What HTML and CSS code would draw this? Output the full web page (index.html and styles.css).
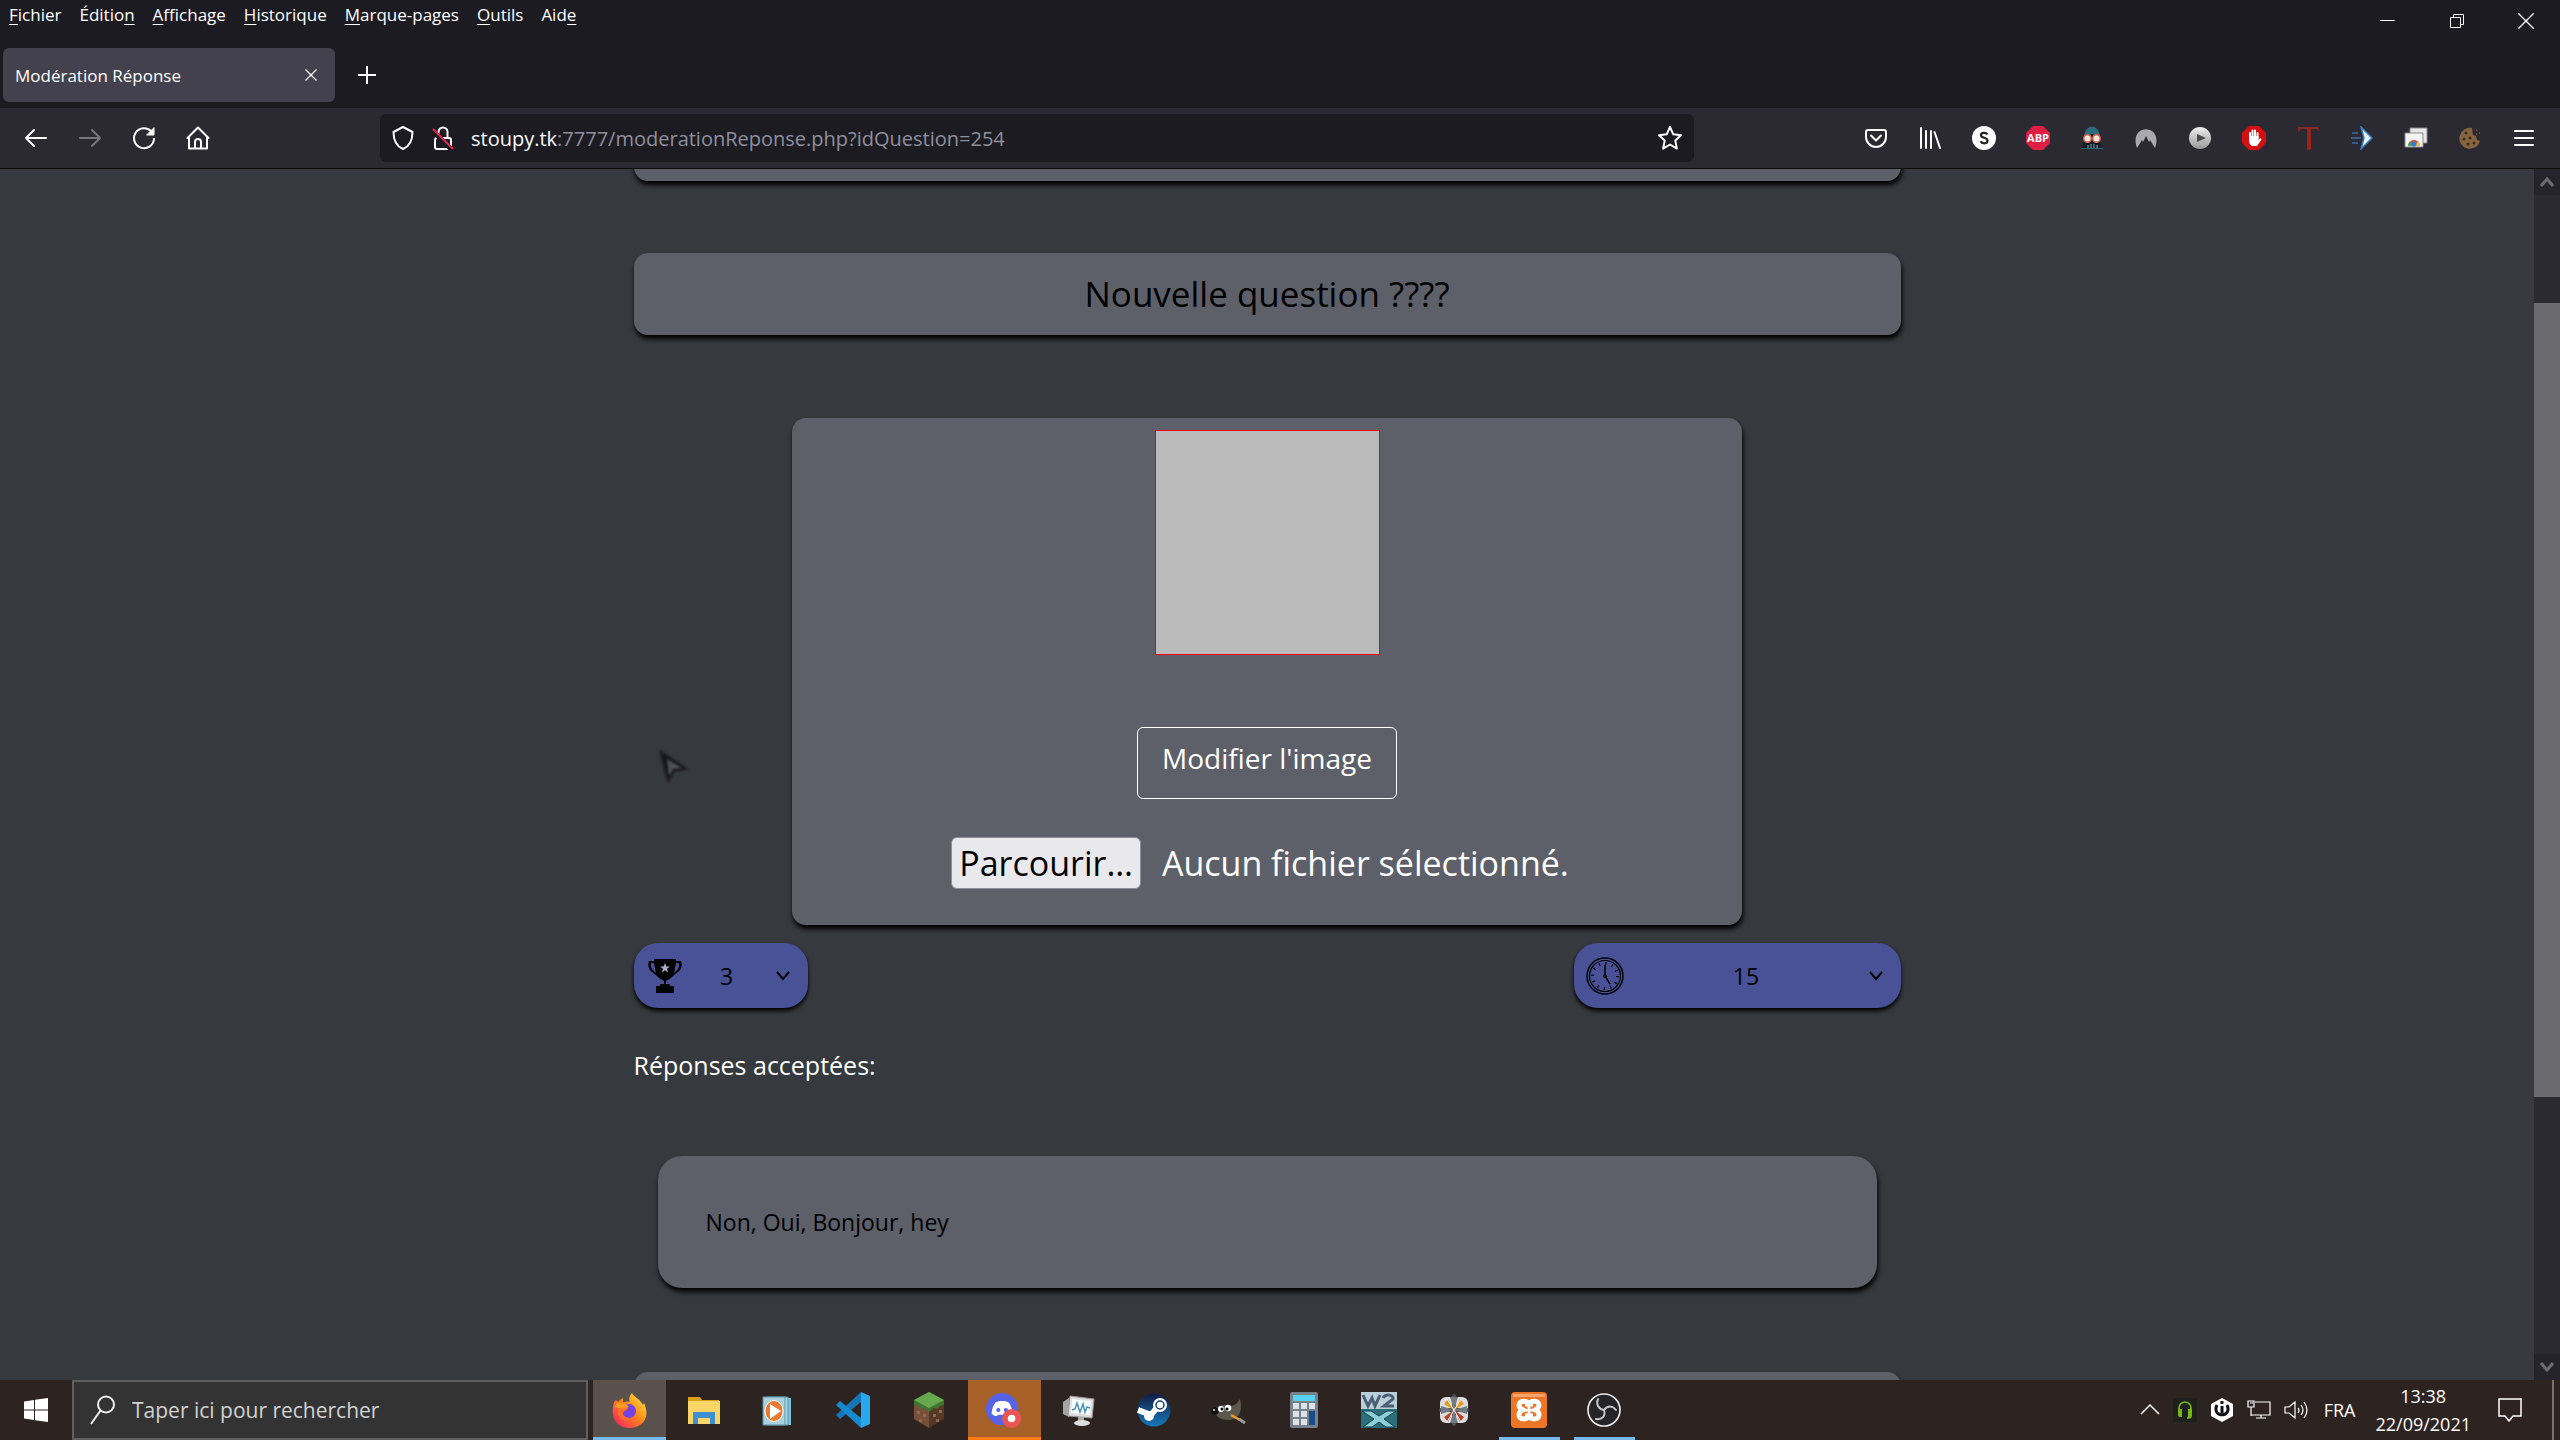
FILE: index.html
```html
<!DOCTYPE html>
<html lang="fr">
<head>
<meta charset="utf-8">
<title>Modération Réponse</title>
<link rel="stylesheet" href="styles.css">
</head>
<body>
<header class="browser">
  <div class="titlebar">
    <nav class="menubar" aria-label="Menus">
      <button><u>F</u>ichier</button>
      <button>Éditio<u>n</u></button>
      <button><u>A</u>ffichage</button>
      <button><u>H</u>istorique</button>
      <button><u>M</u>arque-pages</button>
      <button><u>O</u>utils</button>
      <button>Aid<u>e</u></button>
    </nav>
    <div class="window-controls">
      <button aria-label="Réduire"><svg width="16" height="16" viewBox="0 0 16 16" stroke="#fff"><path d="M0 7.500h15"/></svg></button>
      <button aria-label="Restaurer"><svg width="16" height="16" viewBox="0 0 16 16" fill="none" stroke="#fff"><path d="M1.500 4.500h10v10h-10zM4.500 4.500v-3h10v10h-3"/></svg></button>
      <button aria-label="Fermer"><svg width="16" height="16" viewBox="0 0 16 16" stroke="#fff" stroke-width="1.300"><path d="M0 0l16 16M16 0L0 16"/></svg></button>
    </div>
  </div>
  <div class="tabs">
    <div class="tab"><span>Modération Réponse</span>
      <button aria-label="Fermer l’onglet"><svg width="12" height="12" viewBox="0 0 12 12" stroke="#fbfbfe" stroke-width="1.300"><path d="M.5.5l11 11M11.500.5l-11 11"/></svg></button>
    </div>
    <button class="new-tab" aria-label="Nouvel onglet"><svg width="18" height="18" viewBox="0 0 18 18" stroke="#fbfbfe" stroke-width="2"><path d="M9 0v18M0 9h18"/></svg></button>
  </div>
  <div class="toolbar">
    <div class="nav-buttons">
      <button aria-label="Précédent"><svg width="24" height="24" viewBox="0 0 24 24" fill="none" stroke="#fbfbfe" stroke-width="2" stroke-linecap="round" stroke-linejoin="round"><path d="M22 12H2M10 4l-8 8 8 8"/></svg></button>
      <button aria-label="Suivant"><svg width="24" height="24" viewBox="0 0 24 24" fill="none" stroke="#77767e" stroke-width="2" stroke-linecap="round" stroke-linejoin="round"><path d="M2 12h20M14 4l8 8-8 8"/></svg></button>
      <button aria-label="Actualiser"><svg width="24" height="24" viewBox="0 0 24 24" fill="none" stroke="#fbfbfe" stroke-width="2" stroke-linecap="round"><path d="M19.500 5.500A10 10 0 1 0 22 13"/><path d="M22 2v7h-7z" fill="#fbfbfe" stroke-width="1"/></svg></button>
      <button aria-label="Accueil"><svg width="24" height="24" viewBox="0 0 24 24" fill="none" stroke="#fbfbfe" stroke-width="2" stroke-linecap="round" stroke-linejoin="round"><path d="M1.500 12L12 1.500 22.500 12M3 11v11.500h18V11M9 22v-6a3 3 0 0 1 6 0v6"/></svg></button>
    </div>
    <div class="urlbar">
      <svg width="24" height="24" viewBox="0 0 24 24" fill="none" stroke="#fbfbfe" stroke-width="2" stroke-linejoin="round"><path d="M12 1l9.500 5c0 8-2 14-9.500 17C4.500 20 2.500 14 2.500 6z"/></svg>
      <svg width="24" height="24" viewBox="0 0 24 24" fill="none" stroke="#fbfbfe" stroke-width="2"><path d="M7.500 12V6a4.500 4.500 0 0 1 9 0v6"/><rect x="4" y="12" width="16" height="11" rx="2"/><path d="M1 4l20 20" stroke="#1c1b22" stroke-width="5"/><path d="M2 3l20 20" stroke="#e22850"/></svg>
      <span class="url"><b>stoupy.tk</b>:7777/moderationReponse.php?idQuestion=254</span>
      <button aria-label="Marquer cette page"><svg width="26" height="26" viewBox="0 0 26 26" fill="none" stroke="#fbfbfe" stroke-width="2" stroke-linejoin="round"><path d="M13 2l3.300 7.300 7.700.9-5.700 5.400 1.600 8L13 19.500l-6.900 4.100 1.600-8L2 10.200l7.700-.9z"/></svg></button>
    </div>
    <div class="extensions">
      <button aria-label="Pocket"><svg viewBox="0 0 24 24" fill="none" stroke="#fbfbfe" stroke-width="2" stroke-linecap="round" stroke-linejoin="round"><path d="M4 4h16a2 2 0 0 1 2 2v5a10 10 0 0 1-20 0V6a2 2 0 0 1 2-2zM7 9.500l5 5 5-5"/></svg></button>
      <button aria-label="Bibliothèque"><svg viewBox="0 0 24 24" fill="none" stroke="#fbfbfe" stroke-width="2" stroke-linecap="round"><path d="M3 2v20M8 5v17M13 5v17M16.500 6l5.500 16"/></svg></button>
      <button aria-label="Stylus"><svg viewBox="0 0 24 24"><circle cx="12" cy="12" r="12" fill="#fff"/><path d="M15.500 8.500C14 6.200 9 6.300 9 9.200c0 3.500 6.500 1.700 6.500 5.500 0 3.300-5.500 3.400-7 .6" fill="none" stroke="#222" stroke-width="2.200"/></svg></button>
      <button aria-label="Adblock Plus"><svg viewBox="0 0 24 24"><path d="M7 0h10l7 7v10l-7 7H7l-7-7V7z" fill="#e01e45"/><text x="12" y="16" class="abp">ABP</text></svg></button>
      <button aria-label="Vador"><svg viewBox="0 0 24 24"><path d="M1 23l4-9L6 6c2-7 10-7 12 0l1 8 4 9z" fill="#151f29"/><path d="M4 11c1-14 15-14 16 0l-8-3z" fill="#2b6b7b"/><circle cx="7.500" cy="12.500" r="3.700" fill="#f7e9e2" stroke="#d8644a" stroke-width="1.500"/><circle cx="16.500" cy="12.500" r="3.700" fill="#f7e9e2" stroke="#d8644a" stroke-width="1.500"/><path d="M8 22v-3M11 22v-4M14 22v-4M17 22v-3" stroke="#71a5b1"/><path d="M1 22.500h22" stroke="#2b6b7b"/></svg></button>
      <button aria-label="NordVPN"><svg viewBox="0 0 24 24"><path d="M3 22C-6-3 30-3 21 22l-5-8-1 2-3-6-3 6-1-2z" fill="#aaa9af"/></svg></button>
      <button aria-label="Lecteur"><svg viewBox="0 0 24 24"><defs><linearGradient id="disc" x2="0" y2="1"><stop stop-color="#eee"/><stop offset="1" stop-color="#999"/></linearGradient></defs><circle cx="12" cy="12" r="11" fill="url(#disc)"/><path d="M9 8l9 4-9 4z" fill="#4b4b4b"/></svg></button>
      <button aria-label="AdBlock"><svg viewBox="0 0 24 24"><path d="M7 0h10l7 7v10l-7 7H7l-7-7V7z" fill="#d40f12"/><path d="M8 12V7M10.500 12V4.500M13 12V4.500M15.500 12V7" stroke="#fff" stroke-width="2" stroke-linecap="round"/><path d="M7 10h9.500v4l2-2 1 1.500L15 20h-5c-2-1-3-3-3-6z" fill="#fff"/></svg></button>
      <button aria-label="Traduction"><svg viewBox="0 0 24 24"><defs><linearGradient id="red" x2="1" y2="1"><stop stop-color="#7d2b29"/><stop offset="1" stop-color="#b71b0e"/></linearGradient></defs><path d="M2 1h20l1 5-2-3h-6v20l-4 1V3H5L2 6z" fill="url(#red)"/></svg></button>
      <button aria-label="Envoi"><svg viewBox="0 0 24 24"><path d="M2 7h6M1 12h10M2 17h6" stroke="#315f87" stroke-width="2"/><path d="M11 1l11 11-11 11 3-11z" fill="#e9f6ff" stroke="#397fbd" stroke-width="1.500"/></svg></button>
      <button aria-label="Galerie"><svg viewBox="0 0 24 24"><path d="M6 2h17v15H6z" fill="#e8e8e8" stroke="#888"/><path d="M1 7h18v14H1z" fill="#f5f5f5" stroke="#888"/><path d="M4 20a6 6 0 0 1 12 0z" fill="#dd4638"/><path d="M4 20a6 6 0 0 1 2-4.500L10 20z" fill="#4aa65c"/><path d="M16 20a6 6 0 0 0-2-4.500L10 20z" fill="#edc13d"/><circle cx="10" cy="18" r="2.500" fill="#3c79d5"/></svg></button>
      <button aria-label="Cookies"><svg viewBox="0 0 24 24"><path d="M14 2a10.500 10.500 0 1 0 8 13l-3-1-1-4-3-1z" fill="#86643f"/><g fill="#3e2918"><circle cx="8" cy="7" r="1.500"/><circle cx="6" cy="13" r="1.500"/><circle cx="12" cy="12" r="1.500"/><circle cx="10" cy="18" r="1.500"/><circle cx="16" cy="17" r="1.500"/></g><path d="M18 4h1M21 7h1M18 8h1" stroke="#86643f" stroke-width="1.500"/></svg></button>
      <button aria-label="Menu"><svg viewBox="0 0 24 24" stroke="#fbfbfe" stroke-width="2" stroke-linecap="round"><path d="M3 5h18M3 12h18M3 19h18"/></svg></button>
    </div>
  </div>
</header>

<div class="viewport">
  <main class="page">
    <section class="card card-above"></section>
    <h1 class="card question">Nouvelle question ????</h1>
    <section class="card picture-card">
      <div class="picture"></div>
      <button class="edit-picture">Modifier l'image</button>
      <div class="file-row">
        <button class="browse">Parcourir…</button>
        <label for="picture-file">Aucun fichier sélectionné.</label>
        <input id="picture-file" type="file" hidden>
      </div>
    </section>
    <div class="settings">
      <div class="pill points">
        <svg width="34" height="34" viewBox="0 0 34 34"><path d="M6 0h22v2h5c3 9-4 11-8 15-2 2-5 4-7 5v3h3c1 0 1 1 1 2h4v7H8v-7h4c0-1 0-2 1-2h3v-3c-2-1-5-3-7-5C5 13-2 11 1 2h5zM3 4c-1 6 3 8 5 10L6 4zm28 0h-3l-2 10c2-2 6-4 5-10z" fill="#000" fill-rule="evenodd"/><path d="M17 4l1.300 3.400h3.700l-3 2.300 1.100 3.700L17 11.200l-3.100 2.200 1.100-3.700-3-2.300h3.700z" fill="#a9aed0"/></svg>
        <select aria-label="Points"><option>3</option></select>
        <svg class="chevron" width="14" height="10" viewBox="0 0 14 10" fill="none" stroke="#000" stroke-width="2"><path d="M1 1l6 7 6-7"/></svg>
      </div>
      <div class="pill duration">
        <svg width="38" height="38" viewBox="0 0 38 38" fill="none" stroke="#000"><circle cx="19" cy="19" r="18" stroke-width="1.500"/><circle cx="19" cy="19" r="15.500" stroke-width="1.200"/><circle cx="19" cy="19" r="12.500" stroke-width="3" stroke-dasharray="1.200 5.345"/><path d="M19 8v11l5 8" stroke-width="1.500"/><circle cx="19" cy="19" r="1.500"/></svg>
        <select aria-label="Durée"><option>15</option></select>
        <svg class="chevron" width="14" height="10" viewBox="0 0 14 10" fill="none" stroke="#000" stroke-width="2"><path d="M1 1l6 7 6-7"/></svg>
      </div>
    </div>
    <h2 class="answers-title">Réponses acceptées:</h2>
    <p class="card answers">Non, Oui, Bonjour, hey</p>
    <section class="card card-below"></section>
  </main>
  <div class="scrollbar">
    <div class="scroll-arrow"><svg width="14" height="12" viewBox="0 0 14 12" fill="none" stroke="#6b6b70" stroke-width="3"><path d="M1 10l6-7 6 7"/></svg></div>
    <div class="scroll-track"><div class="scroll-thumb"></div></div>
    <div class="scroll-arrow"><svg width="14" height="12" viewBox="0 0 14 12" fill="none" stroke="#6b6b70" stroke-width="3"><path d="M1 2l6 7 6-7"/></svg></div>
  </div>
  <svg class="cursor" width="40" height="44" viewBox="0 0 40 44"><path d="M4 4l27 18-13 2-6 11z" fill="#141518" stroke="#1f2023" stroke-width="2" stroke-linejoin="round"/><path d="M11 12l15 9-9 1-4 7z" fill="#505156"/></svg>
</div>

<footer class="taskbar">
  <button class="start" aria-label="Démarrer"><svg width="24" height="24" viewBox="0 0 24 24" fill="#fff"><path d="M0 3.500L10 2v9.500H0zM11 1.800L24 0v11.500H11zM0 12.500h10V22L0 20.500zM11 12.500h13V24l-13-1.800z"/></svg></button>
  <label class="search">
    <svg width="25" height="30" viewBox="0 0 25 30" fill="none" stroke="#eee" stroke-width="2"><circle cx="16" cy="9.500" r="8"/><path d="M10.500 15.500L1 29"/></svg>
    <input type="text" placeholder="Taper ici pour rechercher" aria-label="Rechercher">
  </label>
  <div class="apps">
    <button class="app active" aria-label="Firefox"><svg viewBox="0 0 36 36"><defs><linearGradient id="fox" x1="1" x2="0" y2="1"><stop stop-color="#fff44f"/><stop offset=".45" stop-color="#ff8b16"/><stop offset="1" stop-color="#f5156c"/></linearGradient></defs><path d="M21 1c2 4 8 6 11 12 1-1 1-3 0-4 9 17-1 27-14 27C7 36 0 27 2 16c0-4 1-7 3-8l2 2c1-1 3-3 5-4v4c3 0 5-1 7 0-2-3 0-7 2-9z" fill="url(#fox)"/><circle cx="18" cy="19" r="7" fill="#7542e5"/><path d="M8 15c4-2 5 1 9 1-1 3-5 2-5 6 1 5 8 5 12 2-3 7-15 6-17-2z" fill="#ff6b2e"/><path d="M3 15l4-5c3 2 8 1 11 5l-6 2-4-1z" fill="#ff9c20"/></svg></button>
    <button class="app" aria-label="Explorateur"><svg viewBox="0 0 36 36"><path d="M2 5h12l2 3h17v10H2z" fill="#dba013"/><path d="M2 9h32v23H2z" fill="#fbd565"/><path d="M7 20h22v12h-5v-6H12v6H7z" fill="#3f90d2"/></svg></button>
    <button class="app" aria-label="Lecteur multimédia"><svg viewBox="0 0 36 36"><path d="M9 6h21v27H9z" fill="#7fbfd8"/><path d="M6 5h21v28H6z" fill="#a6d8e8" stroke="#5793ab"/><path d="M2 5h22v28H2z" fill="#a9d2de" stroke="#5c95a8"/><ellipse cx="13" cy="19" rx="9" ry="10.500" fill="#ec7a2e" stroke="#fff"/><path d="M9 12l11 7-11 8z" fill="#fff"/></svg></button>
    <button class="app" aria-label="Visual Studio Code"><svg viewBox="0 0 36 36"><path d="M25 0v10L4 27l-4-4z" fill="#1476b8"/><path d="M0 13l4-4 21 17v10z" fill="#1689cf"/><path d="M25 0l9 4v28l-9 4z" fill="#29a7f0"/></svg></button>
    <button class="app" aria-label="Minecraft"><svg viewBox="0 0 36 36"><path d="M3 10l15 7v19L3 27z" fill="#765039"/><path d="M33 10l-15 7v19l15-9z" fill="#553726"/><path d="M18 0l15 8v5l-4 1-3 3-3-1-5 4-5-4-3 1-3-3-4-1V8z" fill="#3f7431"/><path d="M18 0l15 8-15 8L3 8z" fill="#68a84d"/><path d="M6 19h3v3H6zM12 22h3v3h-3zM8 27h3v3H8zM22 22h3v3h-3zM28 18h3v3h-3zM25 27h3v3h-3z" fill="#8c6a50"/></svg></button>
    <button class="app alert" aria-label="Discord"><svg viewBox="0 0 38 38"><circle cx="17" cy="18" r="17" fill="#5663e8"/><path d="M10 11c5-2 9-2 14 0 3 4 4 8 4 12-4 4-6 2-7 1h-8c-1 1-3 3-7-1 0-4 1-8 4-12z" fill="#fff"/><circle cx="13" cy="19" r="2.200" fill="#5663e8"/><circle cx="21" cy="19" r="2.200" fill="#5663e8"/><circle cx="27" cy="28" r="10" fill="#ea5556"/><circle cx="27" cy="28" r="4" fill="#fff"/></svg></button>
    <button class="app" aria-label="Performances"><svg viewBox="0 0 36 36"><path d="M2 10l6-4v19l-6-3z" fill="#a5a5a5"/><path d="M9 4l24 3-2 19-24-2z" fill="#ddd" stroke="#999"/><path d="M11 7l19 2-1 14-19-2z" fill="#f5fbff"/><path d="M11 18l3-1 2-6 3 9 3-8 2 8 2-5 3 1" fill="none" stroke="#4b91b8" stroke-width="1.500"/><path d="M17 25h6v5h-6z" fill="#aaa"/><ellipse cx="21" cy="31" rx="8" ry="3" fill="#ddd"/></svg></button>
    <button class="app" aria-label="Steam"><svg viewBox="0 0 36 36"><defs><linearGradient id="steam" x2="0" y2="1"><stop stop-color="#101c44"/><stop offset="1" stop-color="#1779b8"/></linearGradient></defs><circle cx="18" cy="18" r="16.500" fill="url(#steam)"/><path d="M2 18l13 5 8-10" fill="none" stroke="#fff" stroke-width="6"/><circle cx="13" cy="24" r="5" fill="#fff"/><circle cx="24" cy="13" r="7" fill="#fff"/><circle cx="24" cy="13" r="4" fill="#fff" stroke="#174070" stroke-width="1.500"/></svg></button>
    <button class="app" aria-label="GIMP"><svg viewBox="0 0 36 36"><path d="M4 17c3-4 9-5 13-3 5 1 9-2 12-7 3 12-1 21-12 21-7 0-11-3-13-7z" fill="#5d584e"/><circle cx="4" cy="19" r="3.700" fill="#101010"/><circle cx="3" cy="18" r="1" fill="#ddd"/><circle cx="10" cy="17" r="3" fill="#fff"/><circle cx="17" cy="16" r="3.300" fill="#fff"/><circle cx="11" cy="17" r="1.500"/><circle cx="16" cy="17" r="1.600"/><path d="M20 23l9 5" stroke="#f59a25" stroke-width="2.500"/><path d="M28 27l6 4" stroke="#999" stroke-width="3"/></svg></button>
    <button class="app" aria-label="Calculatrice"><svg viewBox="0 0 36 36"><rect x="4" width="28" height="36" rx="2" fill="#77818b"/><path d="M7 3h22v6H7z" fill="#55d2f4"/><g fill="#dce2e8"><path d="M7 11h6v6H7zM15 11h6v6h-6zM23 11h6v6h-6zM7 19h6v6H7zM15 19h6v6h-6zM7 27h6v6H7zM15 27h6v6h-6z"/></g><path d="M23 19h6v14h-6z" fill="#174b8b"/></svg></button>
    <button class="app" aria-label="W2X"><svg viewBox="0 0 36 36"><path d="M0 0h36v17H0z" fill="#b9d0d8"/><path d="M0 17h36v19H0z" fill="#2c6f7b"/><path d="M2 3l5 11 4-8 3 8 5-11M22 6c3-5 11-3 10 1l-9 7h10" fill="none" stroke="#4a6078" stroke-width="3"/><path d="M1 19h9l8 5 8-5h9L23 27l11 8h-9l-7-5-7 5H2l11-8z" fill="#8ad0d6" stroke="#14434f"/></svg></button>
    <button class="app" aria-label="Pixel"><svg viewBox="0 0 36 36"><rect x="4" y="5" width="28" height="26" rx="6" fill="#ddd"/><path d="M18 4v28M5 18h26" stroke="#4d5158" stroke-width="4" stroke-linecap="round"/><path d="M18 18l-4-13h8zM18 18l-4 13h8zM18 18L5 14v8zM18 18l13-4v8z" fill="#747b83"/><path d="M18 18L8 12l4-5zM18 18l10-6-4-5z" fill="#e39a25"/><path d="M18 18L8 25l4 5zM18 18l10 7-4 5z" fill="#b8412b"/><path d="M18 18L11 7M18 18l7-11M18 18l-7 12M18 18l7 12" stroke="#fff"/></svg></button>
    <button class="app running" aria-label="XAMPP"><svg viewBox="0 0 36 36"><rect width="36" height="36" rx="4" fill="#ed7526"/><path d="M2 2h32v3H2z" fill="#f6a36d"/><path d="M18 13c-1-5-10-5-10 0 0 2 2 4 4 5-3 1-4 3-4 5 0 5 8 5 10 1 2 4 10 4 10-1 0-2-1-4-4-5 2-1 4-3 4-5 0-5-9-5-10 0z" fill="#ed7526" stroke="#fff" stroke-width="5"/><path d="M14 13h8M14 23h8M18 14v8" stroke="#fff" stroke-width="3"/></svg></button>
    <button class="app running" aria-label="OBS"><svg viewBox="0 0 36 36"><circle cx="18" cy="18" r="16" fill="#252427" stroke="#e8e8e8" stroke-width="1.700"/><g fill="none" stroke="#c8c8c8" stroke-width="2" stroke-linecap="round"><path d="M18 18c-6-1-8-6-6-11"/><path d="M18 18c4-5 9-4 12 0"/><path d="M18 18c2 6-2 10-8 9"/></g></svg></button>
  </div>
  <div class="tray">
    <svg width="20" height="24" viewBox="0 0 20 24" fill="none" stroke="#fff" stroke-width="1.500"><path d="M1 16l9-9 9 9"/></svg>
    <svg width="24" height="24" viewBox="0 0 24 24"><path d="M0 0h24v24H0z" fill="#1d201d"/><path d="M6 13v-3a6 6 0 0 1 12 0v8q0 2-4 2" fill="none" stroke="#79b515" stroke-width="1.700"/><path d="M5 11h4v8H7q-2 0-2-2zM15 11h4v6q0 2-2 2h-2z" fill="#79b515"/></svg>
    <svg width="24" height="24" viewBox="0 0 24 24"><path d="M12 0l11 6v12l-11 6L1 18V6z" fill="#fff"/><path d="M7 7c-6 13 16 13 10 0" fill="none" stroke="#111" stroke-width="3"/><path d="M12 3v3M12 8v7" stroke="#111" stroke-width="3"/></svg>
    <svg width="24" height="24" viewBox="0 0 24 24" fill="none" stroke="#fff" stroke-width="1.200"><path d="M8 4h15v13H4v-6M9 20h10M14 17v3M1 3h6v6H1zM4 9v9M3 5h3"/></svg>
    <svg width="24" height="24" viewBox="0 0 24 24" fill="none" stroke="#fff" stroke-width="1.200"><path d="M1 9h4l6-5v16l-6-5H1zM14 10q2 2 0 5M17 7q4 5 0 10M20 4q6 8 0 16"/></svg>
    <span>FRA</span>
    <time><span>13:38</span><span>22/09/2021</span></time>
    <svg width="24" height="24" viewBox="0 0 24 24" fill="none" stroke="#fff" stroke-width="1.500"><path d="M1 1h22v17h-8l-4 5-4-5H1z"/></svg>
  </div>
</footer>
</body>
</html>
```
FILE: styles.css
```css
* { box-sizing: border-box; }

body {
  margin: 0;
  height: 100vh;
  display: flex;
  flex-direction: column;
  overflow: hidden;
  background: #36393e;
  font-family: "Open Sans", "Noto Sans", sans-serif;
  font-size: 17px;
  color: #fff;
}

button, input, select {
  font: inherit;
  color: inherit;
  background: none;
  border: 0;
  padding: 0;
  margin: 0;
}

button { display: flex; align-items: center; justify-content: center; }
svg { display: block; flex: none; }

/* Browser chrome */
.browser { background: #1c1b22; border-bottom: 1px solid #0c0c0d; flex: none; }
.titlebar { display: flex; justify-content: space-between; height: 42px; }
.menubar { display: flex; gap: 18px; padding-left: 9px; height: 28px; }
.menubar u { text-underline-offset: 3px; }
.window-controls { display: flex; }
.window-controls button { width: 69px; }

.tabs { display: flex; align-items: center; height: 66px; padding-left: 3px; gap: 23px; }
.tab {
  display: flex;
  align-items: center;
  justify-content: space-between;
  width: 332px;
  height: 54px;
  padding: 0 18px 0 12px;
  border-radius: 6px;
  background: #42414d;
}

.toolbar { display: flex; align-items: center; height: 60px; background: #2b2a33; }
.nav-buttons { display: flex; padding-left: 9px; }
.nav-buttons button, .extensions button { width: 54px; height: 48px; }
.urlbar {
  display: flex;
  align-items: center;
  flex: 1;
  height: 48px;
  margin-left: 155px;
  padding: 0 11px;
  gap: 16px;
  border-radius: 6px;
  background: #1c1b22;
  font-size: 20px;
}
.url { flex: 1; color: #8f8f9d; }
.url b { font-weight: 400; color: #fbfbfe; }
.extensions { display: flex; margin-left: 155px; padding-right: 9px; }
.extensions svg { width: 24px; height: 24px; }
.abp { font: 700 11px "Open Sans", sans-serif; fill: #fff; text-anchor: middle; }

/* Web page */
.viewport { position: relative; display: flex; flex: 1; min-height: 0; overflow: hidden; }
.page { flex: 1; display: flex; flex-direction: column; align-items: center; }
.card {
  flex: none;
  width: 50%;
  margin: 0;
  border-radius: 14px;
  background: #5d5f69;
  box-shadow: 1px 4px 5px #000;
}
.card-above, .card-below { height: 82px; }
.card-above { margin-top: -70px; }
.question {
  margin-top: 72px;
  height: 82px;
  line-height: 82px;
  text-align: center;
  color: #000;
  font-size: 35px;
  font-weight: 400;
}
.picture-card {
  width: 37.5%;
  margin-top: 83px;
  padding: 12px 0 36px;
  display: flex;
  flex-direction: column;
  align-items: center;
}
.picture { width: 225px; height: 225px; border: 1px solid #f00; background: #bbb; }
.edit-picture {
  height: 72px;
  margin-top: 72px;
  padding: 0 24px 10px;
  border: 1px solid #fff;
  border-radius: 6px;
  font-size: 28px;
}
.file-row { display: flex; align-items: center; gap: 21px; margin-top: 38px; padding-right: 14px; font-size: 34px; }
.browse {
  height: 52px;
  padding: 0 7px;
  border: 1px solid #8f8f9d;
  border-radius: 6px;
  background: #e9e9ed;
  color: #000;
}
.settings { display: flex; justify-content: space-between; width: 50%; margin-top: 18px; }
.pill {
  display: grid;
  grid-template-columns: 38px 1fr 14px;
  align-items: center;
  height: 65px;
  padding: 0 18px 0 12px;
  border-radius: 24px;
  background: #495297;
  box-shadow: 0 3px 4px #000;
  color: #000;
  font-size: 23px;
}
.pill > :first-child { justify-self: center; }
.points { width: 174px; }
.duration { width: 327px; }
.pill select { appearance: none; height: 48px; text-align: center; text-align-last: center; }
.points select { padding-right: 6px; }
.answers-title { width: 50%; margin: 39px 0 0; font-size: 25px; line-height: 36px; font-weight: 400; }
.answers {
  width: calc(50% - 48px);
  margin: 73px 0 84px;
  padding: 50px 48px;
  border-radius: 24px;
  line-height: 32px;
  font-size: 23px;
  color: #000;
}

.scrollbar { display: flex; flex-direction: column; width: 26px; background: #2b2a31; }
.scroll-arrow { height: 26px; display: grid; place-items: center; background: #25242b; }
.scroll-track { flex: 1; padding-top: 108px; }
.scroll-thumb { height: 794px; background: #6b6b6f; }
.cursor { position: absolute; left: 656px; top: 578px; filter: blur(1px); }

/* Windows taskbar */
.taskbar { display: flex; flex: none; height: 60px; background: #2d2321; }
.start { width: 72px; }
.search {
  display: flex;
  align-items: center;
  gap: 17px;
  width: 516px;
  padding: 0 16px;
  border: 2px solid #5f5f5f;
  background: #333;
  font-size: 21px;
}
.search input { flex: 1; min-width: 0; }
.search input::placeholder { color: #d2d2d2; opacity: 1; }
.apps { display: flex; gap: 2px; padding-left: 5px; }
.app { width: 73px; padding-right: 2px; }
.app svg { width: 36px; height: 36px; }
.active { background: #5a504c; box-shadow: inset 0 -3px #76b9ed; }
.alert { background: #a86029; box-shadow: inset 0 -3px #fb7b10; }
.running { background: linear-gradient(#76b9ed, #76b9ed) center bottom / 61px 3px no-repeat; }
.tray {
  display: flex;
  align-items: center;
  gap: 13px;
  margin: 0 6px 0 auto;
  padding-right: 30px;
  border-right: 2px solid #7a706d;
  font-size: 18px;
}
.tray > span { margin-left: 3px; }
.tray time { display: flex; flex-direction: column; align-items: center; line-height: 28px; margin: 0 14px 0 7px; }
```
